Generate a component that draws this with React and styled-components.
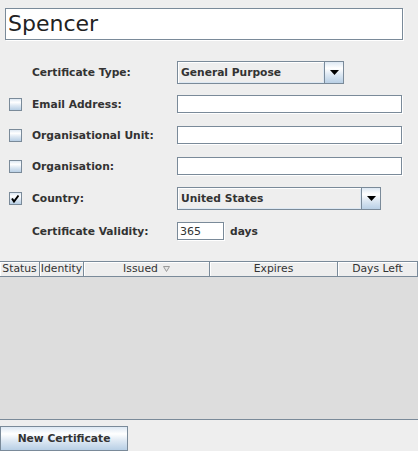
import React from 'react';
import styled, { createGlobalStyle } from 'styled-components';

const dark = '#7a8a99';
const text = '#333333';
// Ocean gradient: light blue -> white -> light blue -> deeper blue
const ocean = 'linear-gradient(to bottom, #dde8f3 0%, #ffffff 30%, #dde8f3 60%, #b8cfe5 100%)';

const GlobalStyle = createGlobalStyle`
    html, body {
        margin: 0;
        padding: 0;
        background: #eeeeee;
    }
`;

const Page = styled.div`
    width: 418px;
    height: 451px;
    display: flex;
    flex-direction: column;
    background: #eeeeee;
    overflow: hidden;
    font-family: "DejaVu Sans", "Noto Sans", sans-serif;
    color: ${text};
`;

const TitleField = styled.input`
    box-sizing: border-box;
    margin: 8px 15px 0 5px;
    height: 32px;
    padding: 0 1px 0 2px;
    border: 1px solid ${dark};
    box-shadow: 1px 1px 0 #ffffff, inset 1px 1px 0 #ffffff;
    background: #ffffff;
    font-family: "DejaVu Sans", sans-serif;
    font-size: 22px;
    color: #222222;
    outline: none;
`;

const Form = styled.div`
    margin-top: 16px;
    display: flex;
    flex-direction: column;
`;

const Row = styled.div`
    height: ${props => props.$h}px;
    display: grid;
    grid-template-columns: 23px 145px 1fr;
    align-items: center;
    padding: 0 16px 0 9px;
`;

const Label = styled.span`
    font-size: 10.7px;
    font-weight: bold;
    white-space: nowrap;
`;

const CheckBox = styled.span`
    box-sizing: border-box;
    width: 13px;
    height: 13px;
    border: 1px solid ${dark};
    background: ${ocean};
    display: flex;
    align-items: center;
    justify-content: center;
`;

const TextField = styled.input`
    box-sizing: border-box;
    width: ${props => props.$w ? `${props.$w}px` : '100%'};
    height: 18px;
    padding: 0 2px;
    border: 1px solid ${dark};
    box-shadow: 1px 1px 0 #ffffff, inset 1px 1px 0 #ffffff;
    background: #ffffff;
    font-family: "DejaVu Sans", sans-serif;
    font-size: 11px;
    color: ${text};
    outline: none;
`;

const Inline = styled.div`
    display: flex;
    align-items: center;
    gap: 6px;
`;

const Combo = styled.div`
    box-sizing: border-box;
    width: ${props => props.$w}px;
    height: 23px;
    display: flex;
    border: 1px solid ${dark};
`;

const ComboValue = styled.div`
    flex: 1;
    display: flex;
    align-items: center;
    padding-left: 3px;
    background: #eeeeee;
    box-shadow: inset 1px 1px 0 #ffffff, inset -1px -1px 0 #dde8f3;
    font-size: 10.7px;
    font-weight: bold;
`;

const ComboButton = styled.div`
    width: 18px;
    border-left: 1px solid ${dark};
    background: ${ocean};
    display: flex;
    align-items: center;
    justify-content: center;
`;

const ScrollPane = styled.div`
    margin-top: 14px;
    height: 160px;
    box-sizing: border-box;
    border-top: 1px solid ${dark};
    border-bottom: 1px solid ${dark};
    background: #dddddd;
    display: flex;
    flex-direction: column;
`;

const Header = styled.div`
    display: flex;
    height: 15px;
    background: #eeeeee;
`;

const HeaderCell = styled.div`
    box-sizing: border-box;
    flex: ${props => props.$w ? `0 0 ${props.$w}px` : '1'};
    border-right: 1px solid ${dark};
    border-bottom: 1px solid ${dark};
    box-shadow: inset 1px 1px 0 #ffffff;
    display: flex;
    align-items: center;
    justify-content: center;
    gap: 5px;
    font-size: 10.8px;
    white-space: nowrap;
    overflow: hidden;
    padding-left: ${props => props.$pl || 0}px;
`;

const Footer = styled.div`
    flex: 1;
    padding-top: 6px;
`;

const Button = styled.button`
    box-sizing: border-box;
    width: 128px;
    height: 25px;
    margin: 0;
    border: 1px solid ${dark};
    background: ${ocean};
    font-family: "DejaVu Sans", sans-serif;
    font-size: 10.7px;
    font-weight: bold;
    color: ${text};
    padding: 0;
`;

const Arrow = () => (
    <svg width="9" height="5" viewBox="0 0 9 5">
        <path d="M0 0 H9 L4.5 5 Z" fill="#000" />
    </svg>
);

const SortArrow = () => (
    <svg width="7" height="6" viewBox="0 0 7 6">
        <path d="M0.5 0.5 H6.5 L3.5 5.5 Z" fill="#e6e6e6" stroke="#9a9a9a" strokeWidth="1" />
    </svg>
);

const Tick = () => (
    <svg width="11" height="11" viewBox="0 0 11 11">
        <path d="M2 5.5 L4 8.5 L8.5 2.5" fill="none" stroke="#000" strokeWidth="2" />
    </svg>
);

function ComboBox({ width, value }) {
    return (
        <Combo $w={width}>
            <ComboValue>{value}</ComboValue>
            <ComboButton><Arrow /></ComboButton>
        </Combo>
    );
}

const columns = [
    { name: 'Status', w: 40 },
    { name: 'Identity', w: 44 },
    { name: 'Issued', w: 126, sorted: true },
    { name: 'Expires', w: 128 },
    { name: 'Days Left' },
];

export default function App() {
    return (
        <Page>
            <GlobalStyle />
            <TitleField defaultValue="Spencer" readOnly />

            <Form>
                <Row $h={33}>
                    <span />
                    <Label>Certificate Type:</Label>
                    <ComboBox width={167} value="General Purpose" />
                </Row>
                <Row $h={31}>
                    <CheckBox />
                    <Label>Email Address:</Label>
                    <TextField readOnly />
                </Row>
                <Row $h={31}>
                    <CheckBox />
                    <Label>Organisational Unit:</Label>
                    <TextField readOnly />
                </Row>
                <Row $h={31}>
                    <CheckBox />
                    <Label>Organisation:</Label>
                    <TextField readOnly />
                </Row>
                <Row $h={34}>
                    <CheckBox><Tick /></CheckBox>
                    <Label>Country:</Label>
                    <ComboBox width={204} value="United States" />
                </Row>
                <Row $h={31}>
                    <span />
                    <Label>Certificate Validity:</Label>
                    <Inline>
                        <TextField $w={47} defaultValue="365" readOnly />
                        <Label>days</Label>
                    </Inline>
                </Row>
            </Form>

            <ScrollPane>
                <Header>
                    {columns.map(c => (
                        <HeaderCell key={c.name} $w={c.w}>
                            {c.name}
                            {c.sorted && <SortArrow />}
                        </HeaderCell>
                    ))}
                </Header>
            </ScrollPane>

            <Footer>
                <Button>New Certificate</Button>
            </Footer>
        </Page>
    );
}
